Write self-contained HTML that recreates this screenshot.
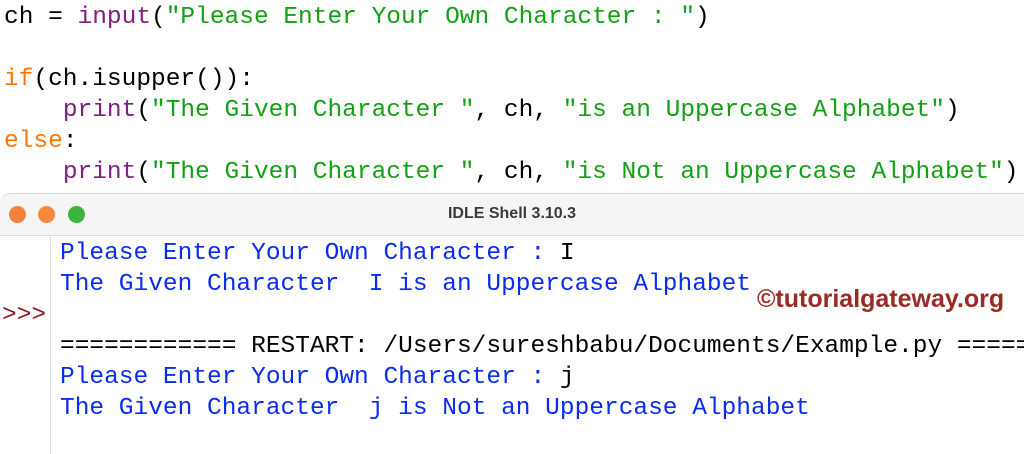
<!DOCTYPE html>
<html><head><style>
body{margin:0;width:1024px;height:424px;background:#fff;overflow:hidden;position:relative;font-family:"Liberation Mono",monospace;}
.code{position:absolute;left:4px;top:2px;font-size:24.5px;line-height:31px;white-space:pre;color:#000;}
.p{color:#7f1f7f}.s{color:#14a014}.k{color:#ff7700}
.win{position:absolute;left:0;top:193px;width:1040px;height:260px;border-top:1px solid #d6d6d6;border-radius:10px 0 0 0;background:#fff;overflow:hidden;}
.bar{height:41px;background:#f5f5f5;border-bottom:1px solid #dcdcdc;position:relative;}
.dot{position:absolute;top:12px;width:17px;height:17px;border-radius:50%;}
.title{position:absolute;left:0;width:1024px;top:11px;text-align:center;font-family:"Liberation Sans",sans-serif;font-weight:bold;font-size:16px;color:#3a3a3a;}
.gut{position:absolute;left:50px;top:42px;width:1px;height:230px;background:#ddd;}
.shell{position:absolute;left:60px;top:44px;font-size:24.5px;line-height:31px;white-space:pre;color:#000;}
.b{color:#0a2cf0}
.pr{position:absolute;left:2px;top:106px;font-size:24.5px;line-height:31px;color:#8b1a1a;}
.wm{position:absolute;left:757px;top:285px;font-family:"Liberation Sans",sans-serif;font-weight:bold;font-size:25px;color:#9b2a22;}
</style></head><body>
<div class="code">ch = <span class="p">input</span>(<span class="s">"Please Enter Your Own Character : "</span>)

<span class="k">if</span>(ch.isupper()):
    <span class="p">print</span>(<span class="s">"The Given Character "</span>, ch, <span class="s">"is an Uppercase Alphabet"</span>)
<span class="k">else</span>:
    <span class="p">print</span>(<span class="s">"The Given Character "</span>, ch, <span class="s">"is Not an Uppercase Alphabet"</span>)</div>
<div class="win">
 <div class="bar">
  <div class="dot" style="left:9px;background:#f5823a"></div>
  <div class="dot" style="left:38px;background:#f58a3a"></div>
  <div class="dot" style="left:68px;background:#3cb43c"></div>
  <div class="title">IDLE Shell 3.10.3</div>
 </div>
 <div class="gut"></div>
 <div class="shell"><span class="b">Please Enter Your Own Character : </span>I
<span class="b">The Given Character  I is an Uppercase Alphabet</span>

============ RESTART: /Users/sureshbabu/Documents/Example.py ============
<span class="b">Please Enter Your Own Character : </span>j
<span class="b">The Given Character  j is Not an Uppercase Alphabet</span></div>
 <div class="pr">&gt;&gt;&gt;</div>
</div>
<div class="wm">©tutorialgateway.org</div>
</body></html>
